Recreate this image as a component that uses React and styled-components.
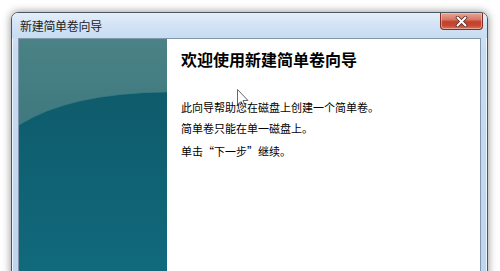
import React from "react";
import styled, { createGlobalStyle } from "styled-components";

const GlobalStyle = createGlobalStyle`
  html, body {
    margin: 0;
    padding: 0;
    background: #ffffff;
    overflow: hidden;
  }
  body {
    font-family: "Noto Sans CJK SC", "Noto Sans", sans-serif;
  }
`;

const Page = styled.div`
  position: relative;
  width: 500px;
  height: 271px;
  padding: 12px 0 0 11px;
  box-sizing: border-box;
  overflow: hidden;
`;

const Window = styled.div`
  width: 477px;
  height: 300px;
  box-sizing: border-box;
  border: 1px solid #4b5663;
  border-radius: 7px 7px 0 0;
  background: linear-gradient(180deg, #dbe9f7 0%, #c8dcf1 12%, #bcd4ee 100%);
  box-shadow: 0 0 9px rgba(0, 0, 0, 0.45), inset 0 0 0 1px rgba(255, 255, 255, 0.7);
  display: flex;
  flex-direction: column;
`;

const TitleBar = styled.div`
  height: 25px;
  display: flex;
  align-items: flex-start;
  padding: 0 4px 0 8px;
  background: linear-gradient(180deg, #e4eefa 0%, #d2e3f5 50%, #c7dcf2 100%);
  border-radius: 6px 6px 0 0;
`;

const Title = styled.div`
  margin-top: 5px;
  font-size: 12px;
  line-height: 16px;
  color: #1e1e1e;
  letter-spacing: -0.3px;
`;

const CloseButton = styled.div`
  margin-left: auto;
  width: 43px;
  height: 17px;
  box-sizing: border-box;
  border: 1px solid #7e3027;
  border-top: none;
  border-radius: 0 0 4px 4px;
  background: linear-gradient(
    180deg,
    #e8a597 0%,
    #d77967 40%,
    #c3402c 55%,
    #c74a33 80%,
    #dc7a5f 100%
  );
  box-shadow: inset 0 0 0 1px rgba(255, 210, 200, 0.5);
  display: flex;
  align-items: center;
  justify-content: center;
`;

const Client = styled.div`
  flex: 1;
  margin: 0 6px 0 6px;
  border: 1px solid #8297ad;
  display: flex;
  background: #ffffff;
`;

const Sidebar = styled.div`
  width: 148px;
  flex-shrink: 0;
  position: relative;
  background: linear-gradient(180deg, #467f83 0%, #2c6c76 35%, #175f6e 100%);
`;

const SidebarArt = styled.svg`
  display: block;
  width: 148px;
  height: 240px;
`;

const Content = styled.div`
  flex: 1;
  padding: 9px 14px;
  color: #000;
`;

const Heading = styled.div`
  font-size: 16px;
  font-weight: 700;
  line-height: 22px;
  margin-bottom: 30px;
`;

const Line = styled.div`
  font-size: 11px;
  line-height: 14px;
  margin-bottom: ${({ gap }) => gap}px;
`;

const Cursor = styled.svg`
  position: absolute;
  left: 237px;
  top: 89px;
  width: 12px;
  height: 19px;
  opacity: 0.75;
`;

export default function App() {
  return (
    <>
      <GlobalStyle />
      <Page>
        <Window>
          <TitleBar>
            <Title>新建简单卷向导</Title>
            <CloseButton>
              <svg width="13" height="11" viewBox="0 0 13 11">
                <path
                  d="M2.5 1.5 L10.5 9.5 M10.5 1.5 L2.5 9.5"
                  stroke="#5a2a24"
                  strokeWidth="3.6"
                  strokeLinecap="round"
                />
                <path
                  d="M2.5 1.5 L10.5 9.5 M10.5 1.5 L2.5 9.5"
                  stroke="#ffffff"
                  strokeWidth="2"
                  strokeLinecap="round"
                />
              </svg>
            </CloseButton>
          </TitleBar>
          <Client>
            <Sidebar>
              <SidebarArt viewBox="0 0 148 240" preserveAspectRatio="none">
                <defs>
                  <linearGradient id="top" x1="0" y1="0" x2="0" y2="1">
                    <stop offset="0" stopColor="#4a8285" />
                    <stop offset="1" stopColor="#2a6a76" />
                  </linearGradient>
                  <linearGradient id="low" x1="0" y1="0" x2="0" y2="1">
                    <stop offset="0" stopColor="#0e5b6b" />
                    <stop offset="1" stopColor="#116a7d" />
                  </linearGradient>
                </defs>
                <rect x="0" y="0" width="148" height="240" fill="url(#top)" />
                <path d="M0 86 Q 50 54 148 53 L148 240 L0 240 Z" fill="url(#low)" />
                <path
                  d="M0 86 Q 50 54 148 53"
                  fill="none"
                  stroke="#3f7a85"
                  strokeWidth="1"
                  opacity="0.6"
                />
              </SidebarArt>
            </Sidebar>
            <Content>
              <Heading>欢迎使用新建简单卷向导</Heading>
              <Line gap={7}>此向导帮助您在磁盘上创建一个简单卷。</Line>
              <Line gap={9}>简单卷只能在单一磁盘上。</Line>
              <Line gap={0}>单击“下一步”继续。</Line>
            </Content>
          </Client>
        </Window>
        <Cursor viewBox="0 0 12 19">
          <path
            d="M0.5 0.5 L0.5 16 L4 12.5 L6.5 18 L8.5 17 L6 11.5 L11 11.5 Z"
            fill="#ffffff"
            stroke="#333333"
            strokeWidth="1"
            strokeLinejoin="round"
          />
        </Cursor>
      </Page>
    </>
  );
}
